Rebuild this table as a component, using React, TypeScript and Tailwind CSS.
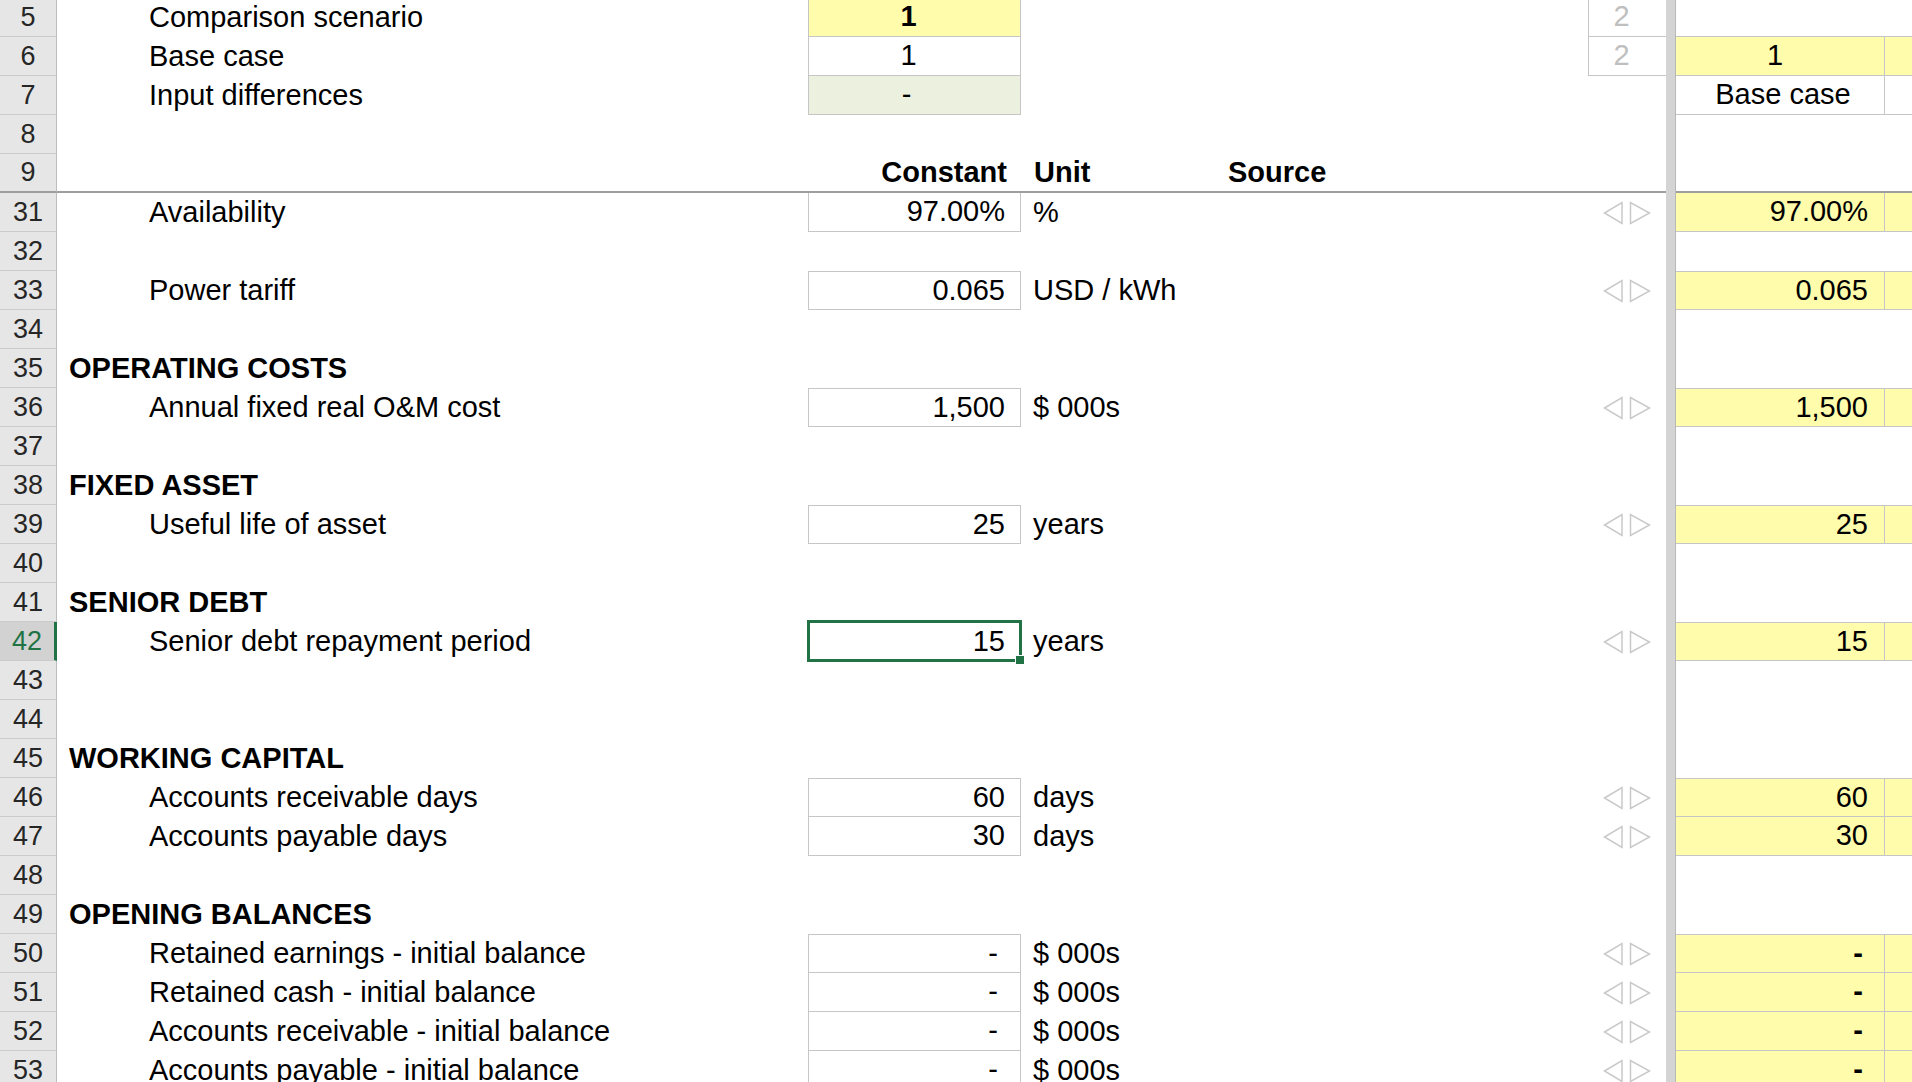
import React from 'react';

type Item = {
  n: number;
  section?: string;
  label?: string;
  value?: string;
  unit?: string;
  selected?: boolean;
};

const rows: Item[] = [
  { n: 31, label: 'Availability', value: '97.00%', unit: '%' },
  { n: 32 },
  { n: 33, label: 'Power tariff', value: '0.065', unit: 'USD / kWh' },
  { n: 34 },
  { n: 35, section: 'OPERATING COSTS' },
  { n: 36, label: 'Annual fixed real O&M cost', value: '1,500', unit: '$ 000s' },
  { n: 37 },
  { n: 38, section: 'FIXED ASSET' },
  { n: 39, label: 'Useful life of asset', value: '25', unit: 'years' },
  { n: 40 },
  { n: 41, section: 'SENIOR DEBT' },
  { n: 42, label: 'Senior debt repayment period', value: '15', unit: 'years', selected: true },
  { n: 43 },
  { n: 44 },
  { n: 45, section: 'WORKING CAPITAL' },
  { n: 46, label: 'Accounts receivable days', value: '60', unit: 'days' },
  { n: 47, label: 'Accounts payable days', value: '30', unit: 'days' },
  { n: 48 },
  { n: 49, section: 'OPENING BALANCES' },
  { n: 50, label: 'Retained earnings - initial balance', value: '-', unit: '$ 000s' },
  { n: 51, label: 'Retained cash - initial balance', value: '-', unit: '$ 000s' },
  { n: 52, label: 'Accounts receivable - initial balance', value: '-', unit: '$ 000s' },
  { n: 53, label: 'Accounts payable - initial balance', value: '-', unit: '$ 000s' },
];

const Arrows = () => (
  <svg width="48" height="24" viewBox="0 0 48 24" fill="none" stroke="#c9c9c9" strokeWidth="1.5">
    <path d="M1.5 12 L19 1.5 V22.5 Z" />
    <path d="M27.5 1.5 V22.5 L46.5 12 Z" />
  </svg>
);

const RowNum = ({ n, active, freeze }: { n: number; active?: boolean; freeze?: boolean }) => (
  <div
    className={`w-[57px] shrink-0 h-full flex items-center justify-center text-[27px] ${
      active
        ? 'bg-[#d2d2d2] text-[#217346] border-r-[3px] border-r-[#217346]'
        : 'bg-[#e6e6e6] text-[#262626] border-r border-r-[#bdbdbd]'
    } ${freeze ? 'border-b-2 border-b-[#9e9e9e]' : 'border-b border-b-[#cbcbcb]'}`}
  >
    {n}
  </div>
);

const Divider = () => <div className="w-[10px] shrink-0 h-full bg-[#d4d4d4] border-r border-r-[#b8b8b8]" />;

export default function App() {
  return (
    <div className="w-[1912px] h-[1082px] overflow-hidden bg-white text-black text-[29px] font-['Liberation_Sans',Arial,sans-serif]">
      <div className="-mt-[2px]">
        {/* row 5 */}
        <div className="flex h-[39px]">
          <RowNum n={5} />
          <div className="w-[92px] shrink-0" />
          <div className="w-[659px] shrink-0 flex items-center whitespace-nowrap">Comparison scenario</div>
          <div className="w-[213px] shrink-0 flex items-center justify-center pr-[12px] font-bold bg-[#fffcab] border-x border-b border-[#c6c6c6]">1</div>
          <div className="w-[195px] shrink-0" />
          <div className="w-[372px] shrink-0" />
          <div className="w-[78px] shrink-0 flex items-center justify-center pr-[12px] text-[#bfbfbf] border-l border-b border-[#c6c6c6]">2</div>
          <Divider />
          <div className="w-[209px] shrink-0 border-b border-[#c6c6c6]" />
          <div className="flex-1 border-b border-[#c6c6c6]" />
        </div>
        {/* row 6 */}
        <div className="flex h-[39px]">
          <RowNum n={6} />
          <div className="w-[92px] shrink-0" />
          <div className="w-[659px] shrink-0 flex items-center whitespace-nowrap">Base case</div>
          <div className="w-[213px] shrink-0 flex items-center justify-center pr-[12px] border-x border-b border-[#c6c6c6]">1</div>
          <div className="w-[195px] shrink-0" />
          <div className="w-[372px] shrink-0" />
          <div className="w-[78px] shrink-0 flex items-center justify-center pr-[12px] text-[#bfbfbf] border-l border-b border-[#c6c6c6]">2</div>
          <Divider />
          <div className="w-[209px] shrink-0 flex items-center justify-center pr-[10px] bg-[#fffcab] border-r border-b border-[#c6c6c6]">1</div>
          <div className="flex-1 bg-[#fffcab] border-b border-[#c6c6c6]" />
        </div>
        {/* row 7 */}
        <div className="flex h-[39px]">
          <RowNum n={7} />
          <div className="w-[92px] shrink-0" />
          <div className="w-[659px] shrink-0 flex items-center whitespace-nowrap">Input differences</div>
          <div className="w-[213px] shrink-0 flex items-center justify-center pr-[16px] bg-[#ebf1de] border-x border-b border-[#c6c6c6]">-</div>
          <div className="w-[195px] shrink-0" />
          <div className="w-[372px] shrink-0" />
          <div className="w-[78px] shrink-0" />
          <Divider />
          <div className="w-[209px] shrink-0 flex items-center justify-center pl-[6px] border-r border-b border-[#c6c6c6]">Base case</div>
          <div className="flex-1 border-b border-[#c6c6c6]" />
        </div>
        {/* row 8 */}
        <div className="flex h-[39px]">
          <RowNum n={8} />
          <div className="w-[1609px] shrink-0" />
          <Divider />
          <div className="flex-1" />
        </div>
        {/* row 9 - headers and freeze line */}
        <div className="flex h-[39px]">
          <RowNum n={9} freeze />
          <div className="w-[92px] shrink-0 border-b-2 border-[#9e9e9e]" />
          <div className="w-[659px] shrink-0 border-b-2 border-[#9e9e9e]" />
          <div className="w-[213px] shrink-0 flex items-center justify-end pr-[14px] font-bold border-b-2 border-[#9e9e9e]">Constant</div>
          <div className="w-[195px] shrink-0 flex items-center pl-[13px] font-bold border-b-2 border-[#9e9e9e]">Unit</div>
          <div className="w-[372px] shrink-0 flex items-center pl-[12px] font-bold border-b-2 border-[#9e9e9e]">Source</div>
          <div className="w-[78px] shrink-0 border-b-2 border-[#9e9e9e]" />
          <Divider />
          <div className="w-[209px] shrink-0 border-b-2 border-[#9e9e9e]" />
          <div className="flex-1 border-b-2 border-[#9e9e9e]" />
        </div>

        {rows.map((r, i) => {
          const prevInput = i > 0 && !!rows[i - 1].value;
          const isInput = !!r.value;
          const dash = r.value === '-';
          return (
            <div key={r.n} className="flex h-[39px]">
              <RowNum n={r.n} active={r.selected} />
              <div className="w-[92px] shrink-0 flex items-center pl-[12px] whitespace-nowrap font-bold overflow-visible">
                {r.section}
              </div>
              <div className="w-[659px] shrink-0 flex items-center whitespace-nowrap">{r.label}</div>
              <div
                className={`relative w-[213px] shrink-0 flex items-center justify-end ${dash ? 'pr-[22px]' : 'pr-[15px]'} ${
                  isInput ? `border-x border-b border-[#c6c6c6] ${prevInput || i === 0 ? '' : 'border-t'}` : ''
                }`}
              >
                {r.value}
                {r.selected && (
                  <div className="absolute -top-[3px] -left-[2px] -right-[2px] -bottom-[2px] border-[3px] border-[#217346]">
                    <div className="absolute -right-[5px] -bottom-[5px] w-[8px] h-[8px] bg-[#217346] outline outline-1 outline-white" />
                  </div>
                )}
              </div>
              <div className="w-[195px] shrink-0 flex items-center pl-[12px] whitespace-nowrap">{r.unit}</div>
              <div className="w-[372px] shrink-0" />
              <div className="w-[78px] shrink-0 flex items-center pl-[15px]">{isInput && <Arrows />}</div>
              <Divider />
              <div
                className={`w-[209px] shrink-0 flex items-center justify-end ${dash ? 'pr-[21px] font-bold' : 'pr-[16px]'} ${
                  isInput ? `bg-[#fffcab] border-r border-b border-[#c6c6c6] ${prevInput || i === 0 ? '' : 'border-t'}` : ''
                }`}
              >
                {r.value}
              </div>
              <div
                className={`flex-1 ${
                  isInput ? `bg-[#fffcab] border-b border-[#c6c6c6] ${prevInput || i === 0 ? '' : 'border-t'}` : ''
                }`}
              />
            </div>
          );
        })}
      </div>
    </div>
  );
}
